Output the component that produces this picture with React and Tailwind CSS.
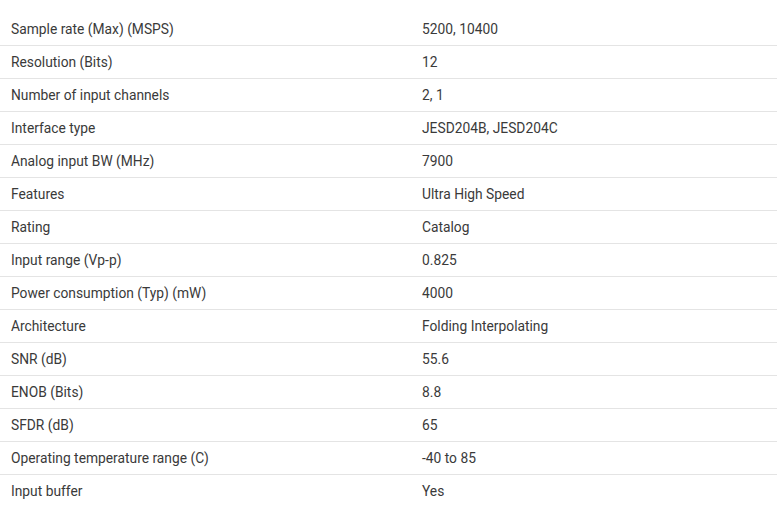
import React from "react";

const rows = [
  ["Sample rate (Max) (MSPS)", "5200, 10400"],
  ["Resolution (Bits)", "12"],
  ["Number of input channels", "2, 1"],
  ["Interface type", "JESD204B, JESD204C"],
  ["Analog input BW (MHz)", "7900"],
  ["Features", "Ultra High Speed"],
  ["Rating", "Catalog"],
  ["Input range (Vp-p)", "0.825"],
  ["Power consumption (Typ) (mW)", "4000"],
  ["Architecture", "Folding Interpolating"],
  ["SNR (dB)", "55.6"],
  ["ENOB (Bits)", "8.8"],
  ["SFDR (dB)", "65"],
  ["Operating temperature range (C)", "-40 to 85"],
  ["Input buffer", "Yes"],
];

export default function App() {
  return (
    <div className="w-[777px] h-[507px] bg-white pt-[13px] text-[#3a3a3a] text-[13.8px] font-['Roboto',sans-serif] overflow-hidden">
      {rows.map(([k, v], i) => (
        <div
          key={k}
          className={`grid grid-cols-[411px_1fr] h-[33px] items-center ${i < rows.length - 1 ? "border-b border-[#e4e4e4]" : ""}`}
        >
          <div className="pl-[11px]">{k}</div>
          <div className="pl-[11px]">{v}</div>
        </div>
      ))}
    </div>
  );
}
